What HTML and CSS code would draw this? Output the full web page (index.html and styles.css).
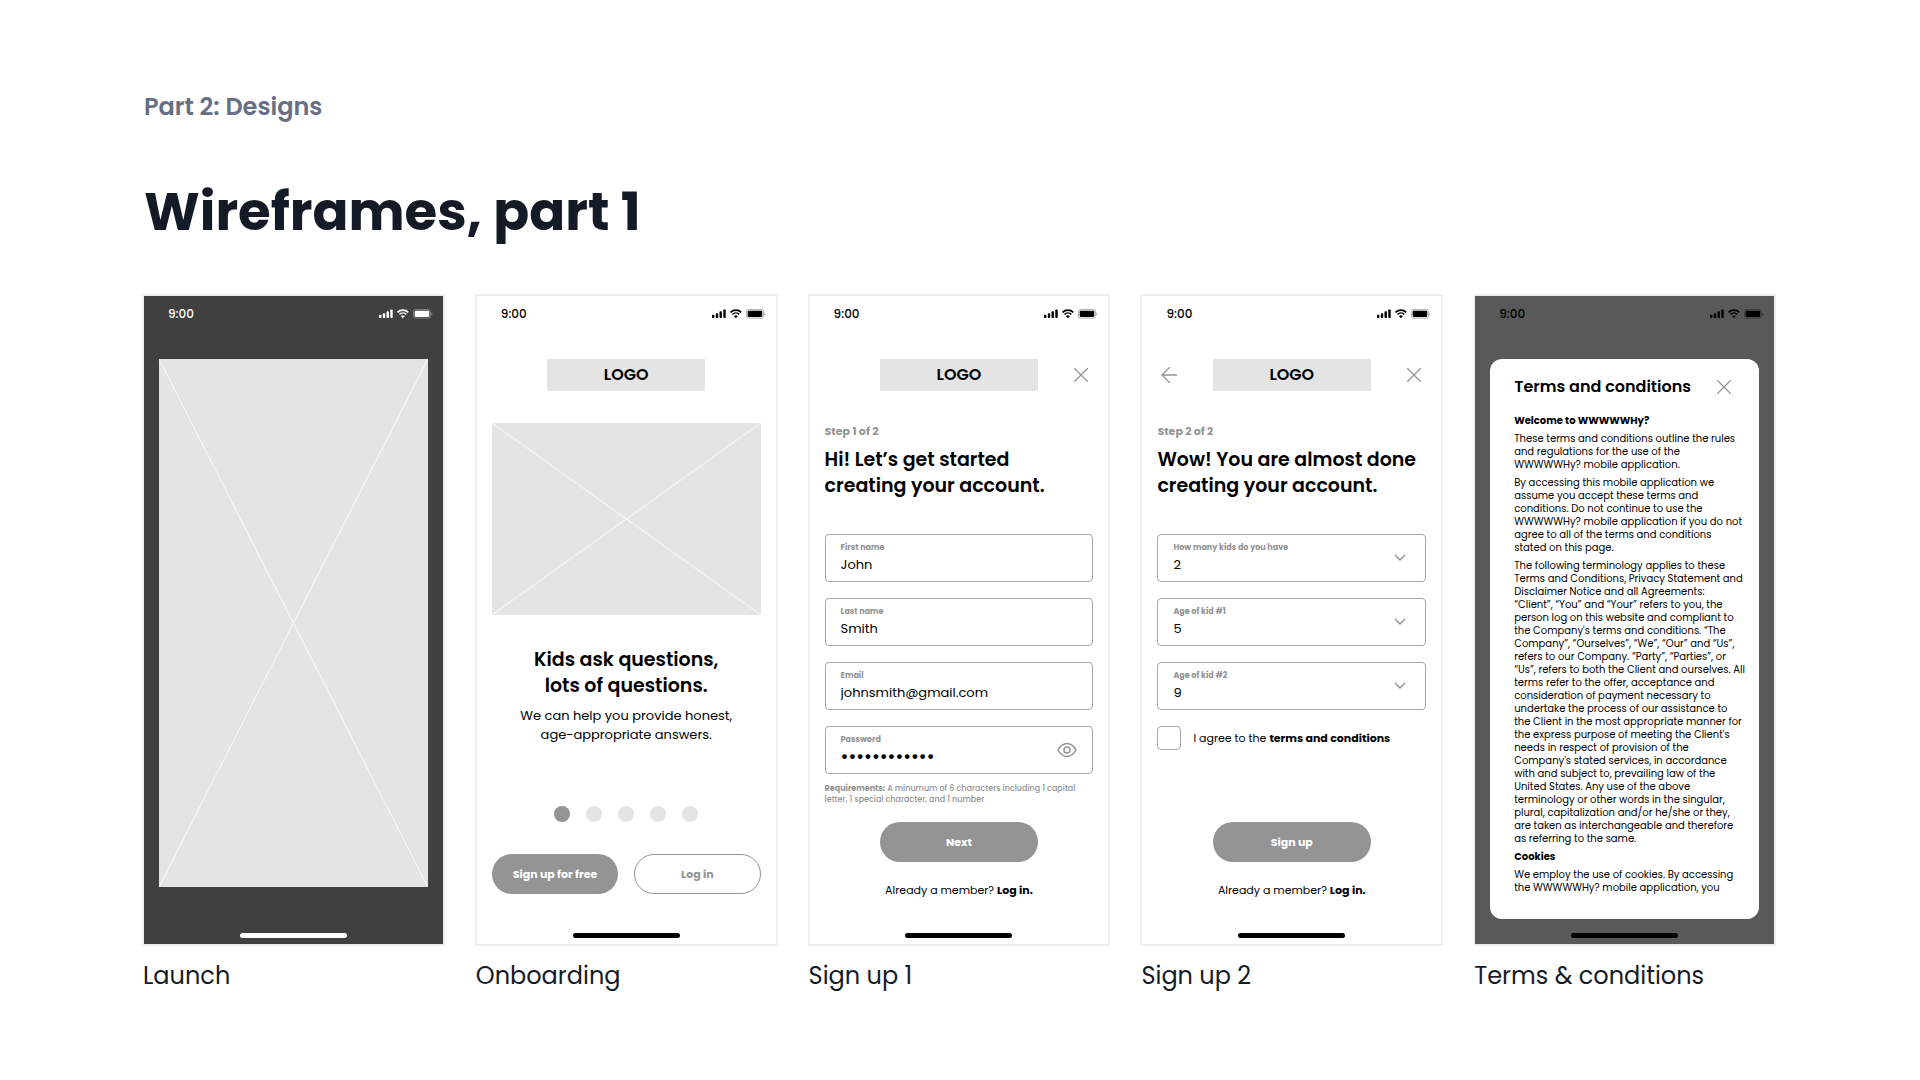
FILE: index.html
```html
<!DOCTYPE html>
<html lang="en">
<head>
  <meta charset="UTF-8">
  <meta name="viewport" content="width=device-width, initial-scale=1">
  <title>Wireframes, part 1</title>
  <link rel="stylesheet" href="styles.css">
</head>
<body>
  <svg class="sprite" aria-hidden="true">
    <symbol id="status" viewBox="0 0 67 12">
      <rect x="0" y="7" width="3" height="4" rx="1"/>
      <rect x="4.7" y="5" width="3" height="6" rx="1"/>
      <rect x="9.3" y="2.6" width="3" height="8.4" rx="1"/>
      <rect x="14" y="0.3" width="3" height="10.7" rx="1"/>
      <g transform="translate(22 0)">
        <path d="M1 3.9A9.6 9.6 0 0 1 14.3 3.9M3.4 6.5A6.1 6.1 0 0 1 11.9 6.5" fill="none" stroke="currentColor" stroke-width="2"/>
        <path d="M7.65 11.2L5.2 8.7A3.5 3.5 0 0 1 10.1 8.7Z"/>
      </g>
      <rect x="42.8" y="0.5" width="21" height="10.6" rx="2.4" fill="none" stroke="currentColor" opacity=".4"/>
      <rect x="44.3" y="2" width="18" height="7.6" rx="1.3"/>
      <path d="M65 4v4a2.2 2.2 0 0 0 0-4z" opacity=".4"/>
    </symbol>
    <symbol id="close" viewBox="0 0 14 14"><path d="M.5.5l13 13M13.5.5l-13 13"/></symbol>
    <symbol id="back" viewBox="0 0 16 16"><path d="M15.5 8H1M8.5.5L1 8l7.5 7.5"/></symbol>
    <symbol id="chevron" viewBox="0 0 12 8"><path d="M1 1l5 5 5-5"/></symbol>
    <symbol id="eye" viewBox="0 0 20 16"><path d="M1 8c2.5-4.5 5.5-6.500 9-6.500s6.500 2 9 6.500c-2.500 4.500-5.500 6.500-9 6.500s-6.500-2-9-6.500z"/><circle cx="10" cy="8" r="3"/></symbol>
    <symbol id="cross" viewBox="0 0 100 100" preserveAspectRatio="none"><path d="M0 0l100 100M100 0L0 100" vector-effect="non-scaling-stroke"/></symbol>
  </svg>

  <main class="page">
    <p class="section">Part 2: Designs</p>
    <h1 class="title">Wireframes, part 1</h1>

    <div class="screens">
      <figure class="frame">
        <div class="screen launch">
          <div class="statusbar"><span>9:00</span><svg><use href="#status"/></svg></div>
          <div class="content">
            <svg class="placeholder splash"><use href="#cross"/></svg>
          </div>
          <div class="home"></div>
        </div>
        <figcaption>Launch</figcaption>
      </figure>

      <figure class="frame">
        <div class="screen">
          <div class="statusbar"><span>9:00</span><svg><use href="#status"/></svg></div>
          <div class="content onboarding">
            <div class="topbar"><div class="logo">LOGO</div></div>
            <svg class="placeholder hero"><use href="#cross"/></svg>
            <h2 class="heading">Kids ask questions,<br>lots of questions.</h2>
            <p class="lead">We can help you provide honest,<br>age-appropriate answers.</p>
            <div class="dots"><i class="active"></i><i></i><i></i><i></i><i></i></div>
            <div class="buttons">
              <button class="btn">Sign up for free</button>
              <button class="btn outline">Log in</button>
            </div>
          </div>
          <div class="home"></div>
        </div>
        <figcaption>Onboarding</figcaption>
      </figure>

      <figure class="frame">
        <div class="screen">
          <div class="statusbar"><span>9:00</span><svg><use href="#status"/></svg></div>
          <form class="content">
            <div class="topbar">
              <div class="logo">LOGO</div>
              <button type="button" class="icon close" aria-label="Close"><svg><use href="#close"/></svg></button>
            </div>
            <p class="step">Step 1 of 2</p>
            <h2 class="heading">Hi! Let’s get started<br>creating your account.</h2>
            <div class="fields">
              <div class="field">
                <label for="first">First name</label>
                <input type="text" id="first" value="John">
              </div>
              <div class="field">
                <label for="last">Last name</label>
                <input type="text" id="last" value="Smith">
              </div>
              <div class="field">
                <label for="email">Email</label>
                <input type="email" id="email" value="johnsmith@gmail.com">
              </div>
              <div class="field">
                <label for="password">Password</label>
                <input type="password" id="password" value="Wireframes1!">
                <button type="button" class="icon eye" aria-label="Show password"><svg><use href="#eye"/></svg></button>
              </div>
            </div>
            <p class="help"><b>Requirements:</b> A minumum of 6 characters including 1 capital<br>letter, 1 special character, and 1 number</p>
            <div class="actions">
              <button type="button" class="btn">Next</button>
              <p>Already a member? <a href="#">Log in.</a></p>
            </div>
          </form>
          <div class="home"></div>
        </div>
        <figcaption>Sign up 1</figcaption>
      </figure>

      <figure class="frame">
        <div class="screen">
          <div class="statusbar"><span>9:00</span><svg><use href="#status"/></svg></div>
          <form class="content">
            <div class="topbar">
              <button type="button" class="icon back" aria-label="Back"><svg><use href="#back"/></svg></button>
              <div class="logo">LOGO</div>
              <button type="button" class="icon close" aria-label="Close"><svg><use href="#close"/></svg></button>
            </div>
            <p class="step">Step 2 of 2</p>
            <h2 class="heading">Wow! You are almost done<br>creating your account.</h2>
            <div class="fields">
              <div class="field">
                <label for="kids">How many kids do you have</label>
                <select id="kids"><option>1</option><option selected>2</option><option>3</option></select>
                <svg class="chevron"><use href="#chevron"/></svg>
              </div>
              <div class="field">
                <label for="age1">Age of kid #1</label>
                <select id="age1"><option>4</option><option selected>5</option><option>6</option></select>
                <svg class="chevron"><use href="#chevron"/></svg>
              </div>
              <div class="field">
                <label for="age2">Age of kid #2</label>
                <select id="age2"><option>8</option><option selected>9</option><option>10</option></select>
                <svg class="chevron"><use href="#chevron"/></svg>
              </div>
              <div class="agree">
                <input type="checkbox" id="agree">
                <label for="agree">I agree to the <a href="#terms">terms and conditions</a></label>
              </div>
            </div>
            <div class="actions">
              <button type="button" class="btn">Sign up</button>
              <p>Already a member? <a href="#">Log in.</a></p>
            </div>
          </form>
          <div class="home"></div>
        </div>
        <figcaption>Sign up 2</figcaption>
      </figure>

      <figure class="frame">
        <div class="screen dimmed">
          <div class="statusbar"><span>9:00</span><svg><use href="#status"/></svg></div>
          <div class="content">
            <div class="modal" id="terms">
              <div class="modal-head">
                <h2>Terms and conditions</h2>
                <button class="icon close" aria-label="Close"><svg><use href="#close"/></svg></button>
              </div>
              <div class="terms">
                <h3>Welcome to WWWWWHy?</h3>
                <p>These terms and conditions outline the rules<br>and regulations for the use of the<br>WWWWWHy? mobile application.</p>
                <p>By accessing this mobile application we<br>assume you accept these terms and<br>conditions. Do not continue to use the<br>WWWWWHy? mobile application if you do not<br>agree to all of the terms and conditions<br>stated on this page.</p>
                <p>The following terminology applies to these<br>Terms and Conditions, Privacy Statement and<br>Disclaimer Notice and all Agreements:<br>“Client”, “You” and “Your” refers to you, the<br>person log on this website and compliant to<br>the Company's terms and conditions. “The<br>Company”, “Ourselves”, “We”, “Our” and “Us”,<br>refers to our Company. “Party”, “Parties”, or<br>“Us”, refers to both the Client and ourselves. All<br>terms refer to the offer, acceptance and<br>consideration of payment necessary to<br>undertake the process of our assistance to<br>the Client in the most appropriate manner for<br>the express purpose of meeting the Client's<br>needs in respect of provision of the<br>Company's stated services, in accordance<br>with and subject to, prevailing law of the<br>United States. Any use of the above<br>terminology or other words in the singular,<br>plural, capitalization and/or he/she or they,<br>are taken as interchangeable and therefore<br>as referring to the same.</p>
                <h3>Cookies</h3>
                <p>We employ the use of cookies. By accessing<br>the WWWWWHy? mobile application, you</p>
              </div>
            </div>
          </div>
          <div class="home"></div>
        </div>
        <figcaption>Terms &amp; conditions</figcaption>
      </figure>
    </div>
  </main>
</body>
</html>
```
FILE: styles.css
```css
* { box-sizing: border-box; }
body { margin: 0; background: #fff; color: #000; font-family: Poppins, Inter, sans-serif; font-feature-settings: "cv11" 1; }
h1, h2, h3, p, figure { margin: 0; }
button, input, select { font: inherit; font-feature-settings: inherit; color: inherit; }
button { padding: 0; border: 0; background: none; cursor: pointer; }
a { color: inherit; font-weight: 700; text-decoration: none; }
.sprite { position: absolute; width: 0; height: 0; }

.page { padding: 91px 144px 60px 142px; }
.section { padding-left: 2px; font-size: 24px; line-height: 32px; font-weight: 600; color: #667085; }
.title { margin: 57px 0 50px; padding-left: 2px; font-size: 53px; line-height: 64px; font-weight: 700; color: #151b26; }

.screens { display: grid; grid-template-columns: repeat(5, 1fr); gap: 30px; }
.frame { display: flex; flex-direction: column; min-width: 0; }
.frame figcaption { margin-top: 14px; padding-left: 1px; font-size: 24px; line-height: 32px; color: #151b26; }

.screen { flex: 1; display: flex; flex-direction: column; border: 2px solid #edf0f2; background: #fff; }
.screen.launch { background: #404040; }
.screen.launch .statusbar { color: #fff; }
.screen.launch .home { background: #fff; }
.screen.dimmed { background: #595959; }

.statusbar { display: flex; align-items: center; justify-content: space-between; height: 35px; margin-bottom: 28px; padding: 0 10px 0 24px; font-size: 12px; font-weight: 500; }
.statusbar svg { width: 54px; height: 10px; fill: currentColor; }
.content { flex: 1; display: flex; flex-direction: column; padding: 0 15px; }
.home { width: 107px; height: 5px; margin: 14px auto 6px; border-radius: 3px; background: #000; }

.placeholder { display: block; width: 100%; background: #e4e4e4; stroke: #fafafa; }
.splash { flex: 1; margin-bottom: 32px; }
.hero { height: 192px; margin-top: 32px; }

.topbar { display: grid; grid-template-columns: 1fr 158px 1fr; align-items: center; }
.logo { grid-column: 2; background: #e4e4e4; font-size: 16px; line-height: 32px; font-weight: 600; text-align: center; }
.icon { display: flex; }
.icon svg { width: 14px; height: 14px; fill: none; stroke: #949494; stroke-width: 1.3px; stroke-linecap: round; }
.topbar .close { grid-column: 3; justify-self: end; margin-right: 5px; }
.topbar .back { justify-self: start; margin-left: 4px; }
.icon.back svg { width: 16px; height: 16px; }

.heading { font-size: 19px; line-height: 26px; font-weight: 600; white-space: nowrap; }
.onboarding { text-align: center; }
.onboarding .heading { margin-top: 32px; }
.lead { margin-top: 7px; font-size: 13px; line-height: 19px; }
.dots { display: flex; justify-content: center; gap: 16px; margin: 62px 0 32px; }
.dots i { width: 16px; height: 16px; border-radius: 50%; background: #e4e4e4; }
.dots .active { background: #949494; }
.buttons { display: grid; grid-template-columns: 1fr 1fr; gap: 16px; }
.btn { height: 40px; border-radius: 20px; background: #949494; color: #fff; font-size: 11px; font-weight: 700; }
.btn.outline { border: 1px solid #949494; background: #fff; color: #949494; }

.step { margin: 32px 0 8px; font-size: 11px; line-height: 16px; font-weight: 700; color: #949494; }
.fields { display: grid; gap: 16px; margin-top: 35px; }
.field { display: grid; grid-template-columns: 1fr auto; grid-template-rows: 14px 20px; height: 48px; padding: 6px 15px; border: 1px solid #a8a8a8; border-radius: 4px; }
.field label { grid-area: 1 / 1; font-size: 8px; line-height: 14px; font-weight: 700; color: #949494; }
.field input, .field select { grid-area: 2 / 1; width: 100%; min-width: 0; height: 20px; padding: 0; border: 0; outline: 0; background: none; appearance: none; font-size: 13px; line-height: 20px; }
.field input[type="password"] { font-size: 19px; }
.field .eye, .field .chevron { grid-area: 1 / 2 / 3 / 3; align-self: center; }
.eye svg { width: 20px; height: 16px; stroke-width: 1.5px; }
.chevron { width: 12px; height: 8px; margin-right: 4px; fill: none; stroke: #949494; stroke-width: 1.5px; }
.help { margin-top: 9px; font-size: 8px; line-height: 11px; font-weight: 500; color: #949494; white-space: nowrap; }
.agree { display: flex; align-items: center; gap: 12px; font-size: 11px; }
.agree input { width: 24px; height: 24px; margin: 0; border: 1px solid #a8a8a8; border-radius: 4px; appearance: none; }
.actions { margin-top: auto; padding-bottom: 21px; text-align: center; font-size: 11px; line-height: 16px; }
.actions .btn { width: 158px; margin-bottom: 20px; }

.modal { flex: 1; padding: 17px 20px 25px 24px; border-radius: 12px; background: #fff; white-space: nowrap; }
.modal-head { display: flex; align-items: center; justify-content: space-between; margin-bottom: 16px; }
.modal-head h2 { font-size: 16px; line-height: 22px; font-weight: 600; }
.modal-head .close { margin-right: 8px; }
.terms { display: grid; gap: 5px; font-size: 10px; line-height: 13px; }
.terms h3 { font-size: 10px; font-weight: 700; }
```
